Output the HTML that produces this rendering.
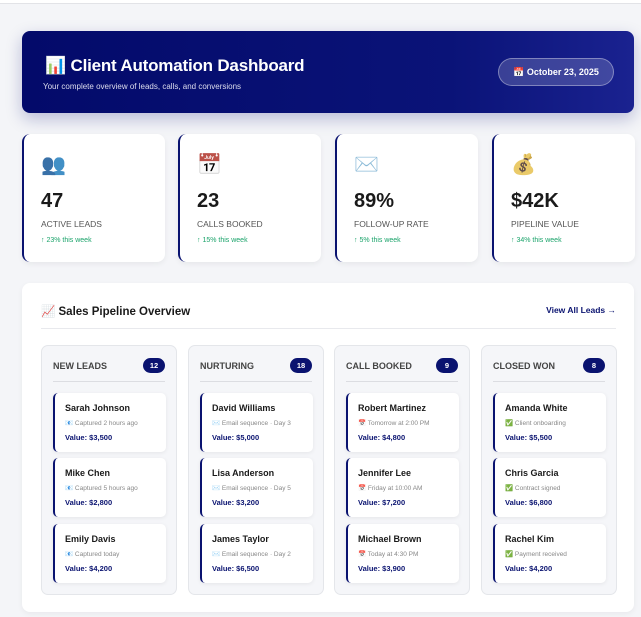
<!DOCTYPE html>
<html><head><style>
*{box-sizing:border-box;margin:0;padding:0}
body{width:641px;height:617px;background:#f4f5f8;font-family:"Liberation Sans","Noto Sans CJK JP",sans-serif;position:relative;overflow:hidden;color:#1a1a1a}
.top{position:absolute;left:0;top:0;width:641px;height:4px;border-bottom:1px solid #e2e3e7;background:#fff}
.hdr{position:absolute;left:22px;top:31px;width:612px;height:82px;border-radius:8px;background:linear-gradient(90deg,#030a6a,#0a1378 70%,#1a2290);box-shadow:0 6px 16px rgba(10,20,120,.25);color:#fff}
.hdr h1{position:absolute;left:23px;top:25px;font-size:17px;font-weight:bold;letter-spacing:-0.2px}
.hdr p{position:absolute;left:21px;top:51px;font-size:8px;color:#dde}
.date{position:absolute;right:20px;top:27px;width:116px;height:28px;border-radius:14px;background:rgba(255,255,255,.18);border:1px solid rgba(255,255,255,.35);font-size:9px;font-weight:bold;text-align:center;line-height:26px}
.stat{position:absolute;top:134px;width:143px;height:128px;background:#fff;border-radius:8px;border-left:2px solid #0a1370;box-shadow:0 2px 6px rgba(0,0,0,.06)}
.stat .ic{position:absolute;left:17px;top:18px;font-size:20px;filter:saturate(.6)}
.stat .n{position:absolute;left:17px;top:56px;font-size:20px;font-weight:bold}
.stat .l{position:absolute;left:17px;top:85px;font-size:8.5px;color:#555}
.stat .g{position:absolute;left:17px;top:103px;font-size:7px;color:#1aa36a}
.panel{position:absolute;left:22px;top:283px;width:612px;height:329px;background:#fff;border-radius:8px;box-shadow:0 2px 6px rgba(0,0,0,.05)}
.panel h2{position:absolute;left:19px;top:21px;font-size:11.5px;font-weight:bold}
.panel .va{position:absolute;right:18px;top:22px;font-size:8.5px;color:#0a1370;font-weight:bold}
.panel .dv{position:absolute;left:19px;right:18px;top:45px;border-top:1px solid #e8e9ed}
.col{position:absolute;top:345px;width:136px;height:250px;background:#f5f6f9;border:1px solid #e4e6ea;border-radius:7px}
.col .t{position:absolute;left:11px;top:15px;font-size:9px;font-weight:bold;color:#444}
.col .b{position:absolute;right:11px;top:12px;width:22px;height:15px;border-radius:8px;background:#0a1370;color:#fff;font-size:7.5px;font-weight:bold;text-align:center;line-height:15px}
.col .hl{position:absolute;left:11px;right:11px;top:35px;border-top:1px solid #dcdde2}
.card{position:absolute;left:11px;width:113px;height:59px;background:#fff;border-radius:5px;border-left:2px solid #0a1370;box-shadow:0 1px 4px rgba(0,0,0,.07)}
.card .nm{position:absolute;left:10px;top:10px;font-size:9px;font-weight:bold}
.card .s{position:absolute;left:10px;top:26px;font-size:6.5px;color:#888;white-space:nowrap}
.card .v{position:absolute;left:10px;top:40px;font-size:7.5px;font-weight:bold;color:#0a1370}
</style></head><body>
<div class="top"></div>
<div class="hdr"><h1>📊 Client Automation Dashboard</h1><p>Your complete overview of leads, calls, and conversions</p><div class="date">📅 October 23, 2025</div></div>
<div class="stat" style="left:22px"><div class="ic">👥</div><div class="n">47</div><div class="l">ACTIVE LEADS</div><div class="g">↑ 23% this week</div></div>
<div class="stat" style="left:178px"><div class="ic">📅</div><div class="n">23</div><div class="l">CALLS BOOKED</div><div class="g">↑ 15% this week</div></div>
<div class="stat" style="left:335px"><div class="ic">✉️</div><div class="n">89%</div><div class="l">FOLLOW-UP RATE</div><div class="g">↑ 5% this week</div></div>
<div class="stat" style="left:492px"><div class="ic">💰</div><div class="n">$42K</div><div class="l">PIPELINE VALUE</div><div class="g">↑ 34% this week</div></div>
<div class="panel"><h2>📈 Sales Pipeline Overview</h2><div class="va">View All Leads →</div><div class="dv"></div></div>

<div class="col" style="left:41px"><div class="t">NEW LEADS</div><div class="b">12</div><div class="hl"></div>
<div class="card" style="top:47px"><div class="nm">Sarah Johnson</div><div class="s">📧 Captured 2 hours ago</div><div class="v">Value: $3,500</div></div>
<div class="card" style="top:112px"><div class="nm">Mike Chen</div><div class="s">📧 Captured 5 hours ago</div><div class="v">Value: $2,800</div></div>
<div class="card" style="top:178px"><div class="nm">Emily Davis</div><div class="s">📧 Captured today</div><div class="v">Value: $4,200</div></div></div>

<div class="col" style="left:188px"><div class="t">NURTURING</div><div class="b">18</div><div class="hl"></div>
<div class="card" style="top:47px"><div class="nm">David Williams</div><div class="s">✉️ Email sequence · Day 3</div><div class="v">Value: $5,000</div></div>
<div class="card" style="top:112px"><div class="nm">Lisa Anderson</div><div class="s">✉️ Email sequence · Day 5</div><div class="v">Value: $3,200</div></div>
<div class="card" style="top:178px"><div class="nm">James Taylor</div><div class="s">✉️ Email sequence · Day 2</div><div class="v">Value: $6,500</div></div></div>

<div class="col" style="left:334px"><div class="t">CALL BOOKED</div><div class="b">9</div><div class="hl"></div>
<div class="card" style="top:47px"><div class="nm">Robert Martinez</div><div class="s">📅 Tomorrow at 2:00 PM</div><div class="v">Value: $4,800</div></div>
<div class="card" style="top:112px"><div class="nm">Jennifer Lee</div><div class="s">📅 Friday at 10:00 AM</div><div class="v">Value: $7,200</div></div>
<div class="card" style="top:178px"><div class="nm">Michael Brown</div><div class="s">📅 Today at 4:30 PM</div><div class="v">Value: $3,900</div></div></div>

<div class="col" style="left:481px"><div class="t">CLOSED WON</div><div class="b">8</div><div class="hl"></div>
<div class="card" style="top:47px"><div class="nm">Amanda White</div><div class="s">✅ Client onboarding</div><div class="v">Value: $5,500</div></div>
<div class="card" style="top:112px"><div class="nm">Chris Garcia</div><div class="s">✅ Contract signed</div><div class="v">Value: $6,800</div></div>
<div class="card" style="top:178px"><div class="nm">Rachel Kim</div><div class="s">✅ Payment received</div><div class="v">Value: $4,200</div></div></div>
</body></html>
